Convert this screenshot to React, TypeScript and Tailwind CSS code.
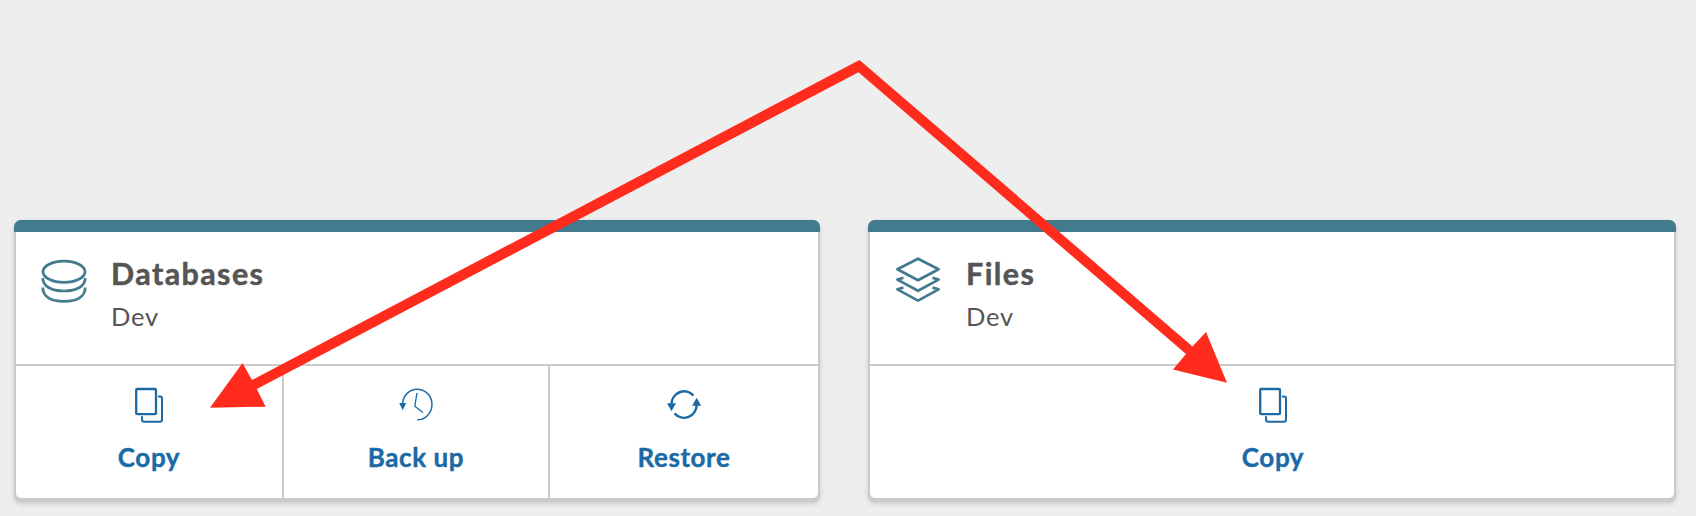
import type { ReactNode } from "react";

const teal = "#417b8d";
const blue = "#1b6aa5";

function DatabaseIcon() {
  return (
    <svg width="48" height="48" viewBox="40 256 48 48" fill="none" stroke={teal} strokeWidth="2.7">
      <ellipse cx="64" cy="271.7" rx="21" ry="10.6" />
      <path d="M42.8 278C42.8 286 51 291 64 291S85.2 286 85.2 278" />
      <path d="M42.8 287.5C42.8 296.5 51 301.3 64 301.3S85.2 296.5 85.2 287.5" />
    </svg>
  );
}

function LayersIcon() {
  return (
    <svg width="49" height="48" viewBox="894 256 49 48" fill="none" stroke={teal} strokeWidth="2.7" strokeLinejoin="round">
      <path d="M918 258.7L938.6 269.2L918 280.2L897.4 269.2Z" />
      <path d="M903.5 277.7L897.4 279.6L918 290.8L938.6 279.6L932.5 277.7" />
      <path d="M903.5 287.5L897.4 289.4L918 300.6L938.6 289.4L932.5 287.5" />
    </svg>
  );
}

function CopyIcon() {
  return (
    <svg width="36" height="40" viewBox="131 384 36 40" fill="none" stroke={blue} strokeWidth="2">
      <rect x="136.2" y="389" width="19.8" height="25.2" rx="1" strokeWidth="2.3" />
      <path d="M158 396.6H160Q162 396.6 162 398.6V419.5Q162 421.8 159.8 421.8H144.3Q142 421.8 142 419.5V416.3" />
    </svg>
  );
}

function BackupIcon() {
  return (
    <svg width="36" height="40" viewBox="398 384 36 40" fill="none" stroke={blue} strokeWidth="1.5">
      <path d="M402.6 404V403.5A14.7 15.3 0 1 1 417.3 419.8" />
      <path d="M417 392.8L414.8 406.2L423 412.6" strokeWidth="1.3" />
      <path d="M399.2 403H406.2L402.7 410.3Z" fill={blue} stroke="none" />
    </svg>
  );
}

function RestoreIcon() {
  return (
    <svg width="36" height="40" viewBox="666 384 36 40" fill="none" stroke={blue} strokeWidth="2.5">
      <path d="M671.4 404.5A12.7 13.3 0 0 1 693.4 395.6" />
      <path d="M674.6 413.4A12.7 13.3 0 0 0 696.7 404.5" />
      <path d="M667 403.3H676L671.5 411.3Z" fill={blue} stroke="none" />
      <path d="M692 405.7H701.2L696.7 397.7Z" fill={blue} stroke="none" />
    </svg>
  );
}

function Action({ icon, label }: { icon: ReactNode; label: string }) {
  return (
    <button className="flex h-full w-full flex-col items-center pt-[18px] font-bold text-[#1b6aa5]">
      {icon}
      <span className="mt-[15px] text-[26px] leading-[36px] tracking-[0.6px] [-webkit-text-stroke:0.4px_#1b6aa5]">{label}</span>
    </button>
  );
}

function Card({ icon, title, children, className }: { icon: ReactNode; title: string; children: ReactNode; className: string }) {
  return (
    <section className={`flex h-[282px] flex-col overflow-hidden rounded-[7px] bg-[#cbcbcb] shadow-[0_2px_5px_rgba(0,0,0,0.15)] ${className}`}>
      <div className="h-3 shrink-0 bg-[#417b8d]" />
      <div className="mx-0.5 mb-1 flex grow flex-col gap-0.5 overflow-hidden rounded-b-[5px]">
        <header className="flex h-[132px] gap-[23px] bg-white pl-6 pt-6">
          {icon}
          <div className="flex flex-col pt-px text-[#555]">
            <h2 className="text-[30.5px] leading-[32px] font-bold tracking-[1.4px] [-webkit-text-stroke:0.5px_#555]">{title}</h2>
            <p className="mt-[11px] text-[25.5px] leading-[32px] tracking-[0.8px]">Dev</p>
          </div>
        </header>
        {children}
      </div>
    </section>
  );
}

export default function App() {
  return (
    <main className="relative flex h-[516px] w-[1696px] items-start gap-12 overflow-hidden bg-[#eee] pl-[14px] pt-[220px] font-['Lato',sans-serif]">
      <Card icon={<DatabaseIcon />} title="Databases" className="w-[806px]">
        <div className="grid grow grid-cols-[266px_264px_1fr] gap-0.5">
          <div className="bg-white"><Action icon={<CopyIcon />} label="Copy" /></div>
          <div className="bg-white"><Action icon={<BackupIcon />} label="Back up" /></div>
          <div className="bg-white"><Action icon={<RestoreIcon />} label="Restore" /></div>
        </div>
      </Card>
      <Card icon={<LayersIcon />} title="Files" className="w-[808px]">
        <div className="grow bg-white pl-0.5"><Action icon={<CopyIcon />} label="Copy" /></div>
      </Card>
      <svg className="pointer-events-none absolute inset-0" width="1696" height="516" viewBox="0 0 1696 516" fill="#ff2b1c">
        <path d="M859.5 60L1192.5 346.5L1206 332L1227 382.7L1173 369.5L1186 354L858.5 72.3L256.8 389L265.7 406.7L210 407.7L242.5 363L252 380Z" />
      </svg>
    </main>
  );
}
